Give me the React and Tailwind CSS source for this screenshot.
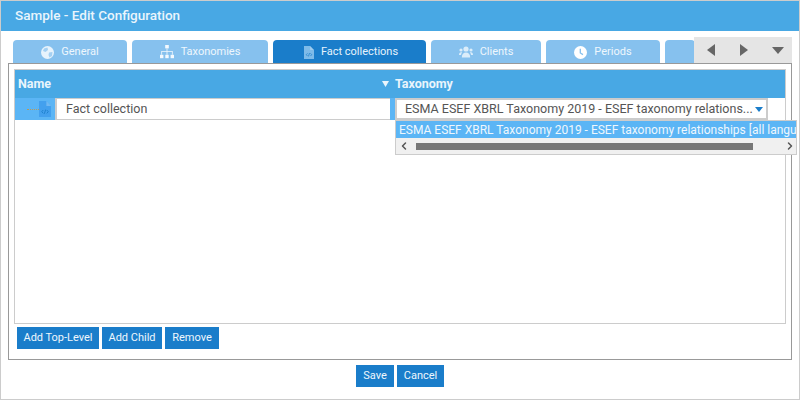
import React from "react";
import { ChevronLeft, ChevronRight } from "lucide-react";

const CodeFile = ({ className = "", w = 12, h = 16 }) => (
  <svg width={w} height={h} viewBox="0 0 13 16" preserveAspectRatio="none" className={className}>
    <path d="M0 0H8L13 5V16H0Z" fill="currentColor" />
    <path d="M8 0L13 5H8Z" fill="#ffffff" fillOpacity="0.25" />
    <path d="M4.6 9L3 10.7L4.6 12.4M8.4 9L10 10.7L8.4 12.4M7.2 8.6L5.8 12.8" fill="none" stroke="#1a7dca" strokeWidth="0.9" />
  </svg>
);

const Globe = () => (
  <svg width="13" height="13" viewBox="0 0 13 13">
    <circle cx="6.5" cy="6.5" r="6.5" fill="#ffffff" fillOpacity="0.8" />
    <path d="M3 2.5L6.5 1.5L7 4L4.5 6L2 5ZM8 6.5L11.5 6L11 10L8.5 11.5L7.5 9Z" fill="#a4d0f2" />
  </svg>
);

const Tree = () => (
  <svg width="14" height="14" viewBox="0 0 14 14" fill="#ffffff" fillOpacity="0.9">
    <rect x="5.2" y="0" width="3.6" height="3.4" />
    <rect x="0" y="9.8" width="3.4" height="3.4" />
    <rect x="5.3" y="9.8" width="3.4" height="3.4" />
    <rect x="10.6" y="9.8" width="3.4" height="3.4" />
    <path d="M6.6 3.4H7.4V6H12.7V9.8H11.9V6.8H7.4V9.8H6.6V6.8H2.1V9.8H1.3V6H6.6Z" />
  </svg>
);

const Users = () => (
  <svg width="14" height="12" viewBox="0 0 14 12" fill="#ffffff" fillOpacity="0.7">
    <circle cx="7" cy="3" r="2.6" />
    <path d="M2.8 11.5C2.8 8 4.6 6.4 7 6.4C9.4 6.4 11.2 8 11.2 11.5Z" />
    <circle cx="2" cy="4" r="1.6" />
    <circle cx="12" cy="4" r="1.6" />
    <path d="M0 9C0 7 .8 6.2 2 6.2C2.5 6.2 2.9 6.3 3.2 6.6C2.5 7.3 2.1 8 2 9ZM14 9C14 7 13.2 6.2 12 6.2C11.5 6.2 11.1 6.3 10.8 6.6C11.5 7.3 11.9 8 12 9Z" />
  </svg>
);

const Clock = () => (
  <svg width="13" height="13" viewBox="0 0 13 13">
    <circle cx="6.5" cy="6.5" r="6.5" fill="#ffffff" />
    <path d="M6.3 2.8V7L9 8.6" fill="none" stroke="#86c1ee" strokeWidth="1.3" />
  </svg>
);

function Tab({ icon, label, width, active }) {
  return (
    <div
      className={`flex h-[23px] shrink-0 items-center justify-center gap-[7px] rounded-t-[4px] pt-[1px] text-[11px] ${
        active ? "bg-[#1a7dca] pl-[3px] text-[#e6f3fc]" : "bg-[#86c1ee] text-[#eef7fd]"
      } ${width}`}
    >
      {icon}
      <span>{label}</span>
    </div>
  );
}

function Btn({ children, className = "" }) {
  return (
    <div className={`flex h-[22px] items-center justify-center bg-[#1a7dca] text-[11px] text-[#eef7fd] ${className}`}>
      {children}
    </div>
  );
}

export default function App() {
  return (
    <div className="h-[400px] w-[800px] overflow-hidden bg-white font-['Roboto',sans-serif]">
      <div className="flex h-[400px] flex-col border border-[#cccccc]">
        <div className="flex h-[30px] shrink-0 items-center bg-[#48a8e4] pb-[1px] pl-[14px] text-[13.5px] font-medium text-[#eaf5fc]">
          Sample - Edit Configuration
        </div>

        <div className="relative mt-[9px] flex h-[23px] shrink-0 gap-[5px] pl-[12px]">
          <Tab width="w-[114px]" icon={<Globe />} label="General" />
          <Tab width="w-[136px]" icon={<Tree />} label="Taxonomies" />
          <Tab width="w-[153px]" active icon={<CodeFile w={10} h={13} className="text-[#7ebbe9]" />} label="Fact collections" />
          <Tab width="w-[110px]" icon={<Users />} label="Clients" />
          <Tab width="w-[114px]" icon={<Clock />} label="Periods" />
          <Tab width="w-[30px]" label="" />
          <div className="absolute right-[7px] top-[-3px] flex h-[26px] w-[98px] items-center bg-[#e5e5e5] text-[#666666]">
            <svg width="8" height="12" viewBox="0 0 8 12" className="ml-[13px]"><path d="M8 0V12L0 6Z" fill="currentColor" /></svg>
            <svg width="8" height="12" viewBox="0 0 8 12" className="ml-[25px]"><path d="M0 0V12L8 6Z" fill="currentColor" /></svg>
            <svg width="12" height="7" viewBox="0 0 12 7" className="ml-[24px]"><path d="M0 0H12L6 7Z" fill="currentColor" /></svg>
          </div>
        </div>

        <div className="ml-[7px] flex h-[297px] w-[784px] shrink-0 flex-col border border-[#999999] bg-white px-[5px] pt-[5px]">
          <div className="relative flex h-[255px] shrink-0 flex-col border border-[#cccccc]">
            <div className="flex h-[28px] shrink-0 items-center bg-[#48a8e4] text-[12.5px] font-bold text-[#eaf5fc]">
              <div className="w-[367px] pl-[3px]">Name</div>
              <svg width="7" height="6" viewBox="0 0 7 6" className="mr-[6px]"><path d="M0 0H7L3.5 6Z" fill="#eaf5fc" /></svg>
              <div>Taxonomy</div>
            </div>

            <div className="flex h-[22px] shrink-0">
              <div className="flex w-[380px] shrink-0 bg-[#5bb5f5] pr-[5px]">
                <div className="ml-[12px] mt-[11px] h-0 w-[12px] border-t border-dotted border-[#b89a5a]" />
                <CodeFile className="mt-[3px] text-[#43a0ee]" />
                <div className="ml-[4px] flex h-[22px] flex-1 items-center border-l-[2px] border-t border-b border-[#cccccc] bg-white pl-[9px] pt-[1px] text-[12.5px] text-[#555555]">
                  Fact collection
                </div>
              </div>
              <div className="flex h-full w-[373px] shrink-0 items-center justify-between border-2 border-[#cccccc] bg-white pl-[8px] pr-[3px] pt-[1px] text-[12.5px] text-[#555555]">
                <span className="whitespace-nowrap">ESMA ESEF XBRL Taxonomy 2019 - ESEF taxonomy relations...</span>
                <svg width="8" height="5" viewBox="0 0 8 5"><path d="M0 0H8L4 5Z" fill="#1a7dca" /></svg>
              </div>
            </div>

            <div className="absolute left-[380px] top-[50px] z-10 w-[402px] border border-[#cccccc] bg-white">
              <div className="flex h-[17px] items-center overflow-hidden whitespace-nowrap bg-[#5bb5f5] pl-[3px] text-[12px] text-[#eef7fd]">
                ESMA ESEF XBRL Taxonomy 2019 - ESEF taxonomy relationships [all languages]
              </div>
              <div className="flex h-[16px] items-center bg-[#f0f0f0] text-[#555555]">
                <ChevronLeft size={12} strokeWidth={3} className="ml-[2px] shrink-0" />
                <div className="ml-[6px] h-[7px] w-[337px] bg-[#777777]" />
                <ChevronRight size={12} strokeWidth={3} className="ml-auto shrink-0" />
              </div>
            </div>
          </div>

          <div className="mt-[3px] flex gap-[3px] pl-[3px]">
            <Btn className="w-[82px]">Add Top-Level</Btn>
            <Btn className="w-[60px]">Add Child</Btn>
            <Btn className="w-[54px]">Remove</Btn>
          </div>
        </div>

        <div className="mt-[5px] flex justify-center gap-[3px]">
          <Btn className="w-[38px]">Save</Btn>
          <Btn className="w-[47px]">Cancel</Btn>
        </div>
      </div>
    </div>
  );
}
